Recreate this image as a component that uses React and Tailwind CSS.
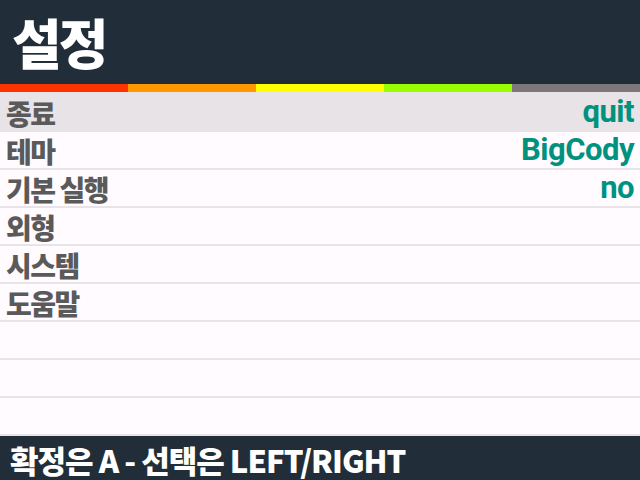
import React from 'react';

const stripe = ['bg-[#ff3300]', 'bg-[#ff9900]', 'bg-[#ffff00]', 'bg-[#99ff00]', 'bg-[#7b777b]'];

const rows = [
  { label: '종료', value: 'quit', selected: true },
  { label: '테마', value: 'BigCody' },
  { label: '기본 실행', value: 'no' },
  { label: '외형' },
  { label: '시스템' },
  { label: '도움말' },
  {},
  {},
  {},
];

const font = { fontFamily: '"Noto Sans CJK KR", "Noto Sans", sans-serif' };

export default function App() {
  return (
    <div className="w-[640px] h-[480px] flex flex-col bg-[#fffbff] overflow-hidden" style={font}>
      {/* Header */}
      <div className="h-[84px] shrink-0 bg-[#212e39] flex items-center px-3">
        <h1 className="text-[54px] font-black text-white leading-none tracking-[-3px]">설정</h1>
      </div>
      <div className="h-2 shrink-0 flex">
        {stripe.map((c, i) => (
          <div key={i} className={`flex-1 ${c}`} />
        ))}
      </div>

      {/* Rows */}
      <div className="flex flex-col">
        {rows.map((r, i) => (
          <div
            key={i}
            className={`${i === 0 ? 'h-[40px] pt-[4px]' : 'h-[38px] pt-[2px]'} shrink-0 flex items-center justify-between px-1.5 border-b-2 border-[#e7e3e7] ${
              r.selected ? 'bg-[#e7e3e7]' : ''
            }`}
          >
            <span className="text-[28px] font-black text-[#5a5a5a] leading-none tracking-[-1.5px]">{r.label}</span>
            {r.value && (
              <span
                className="text-[31px] font-bold text-[#00927e] leading-none tracking-[-0.5px] -mt-1"
                style={{ fontFamily: '"Roboto", "Liberation Sans", sans-serif' }}
              >
                {r.value}
              </span>
            )}
          </div>
        ))}
      </div>

      {/* Footer */}
      <div className="flex-1 bg-[#212e39] flex items-center px-2.5 pt-0.5">
        <span className="text-[31px] font-black text-white leading-none tracking-[-1px]">
          확정은 A - 선택은 LEFT/RIGHT
        </span>
      </div>
    </div>
  );
}
